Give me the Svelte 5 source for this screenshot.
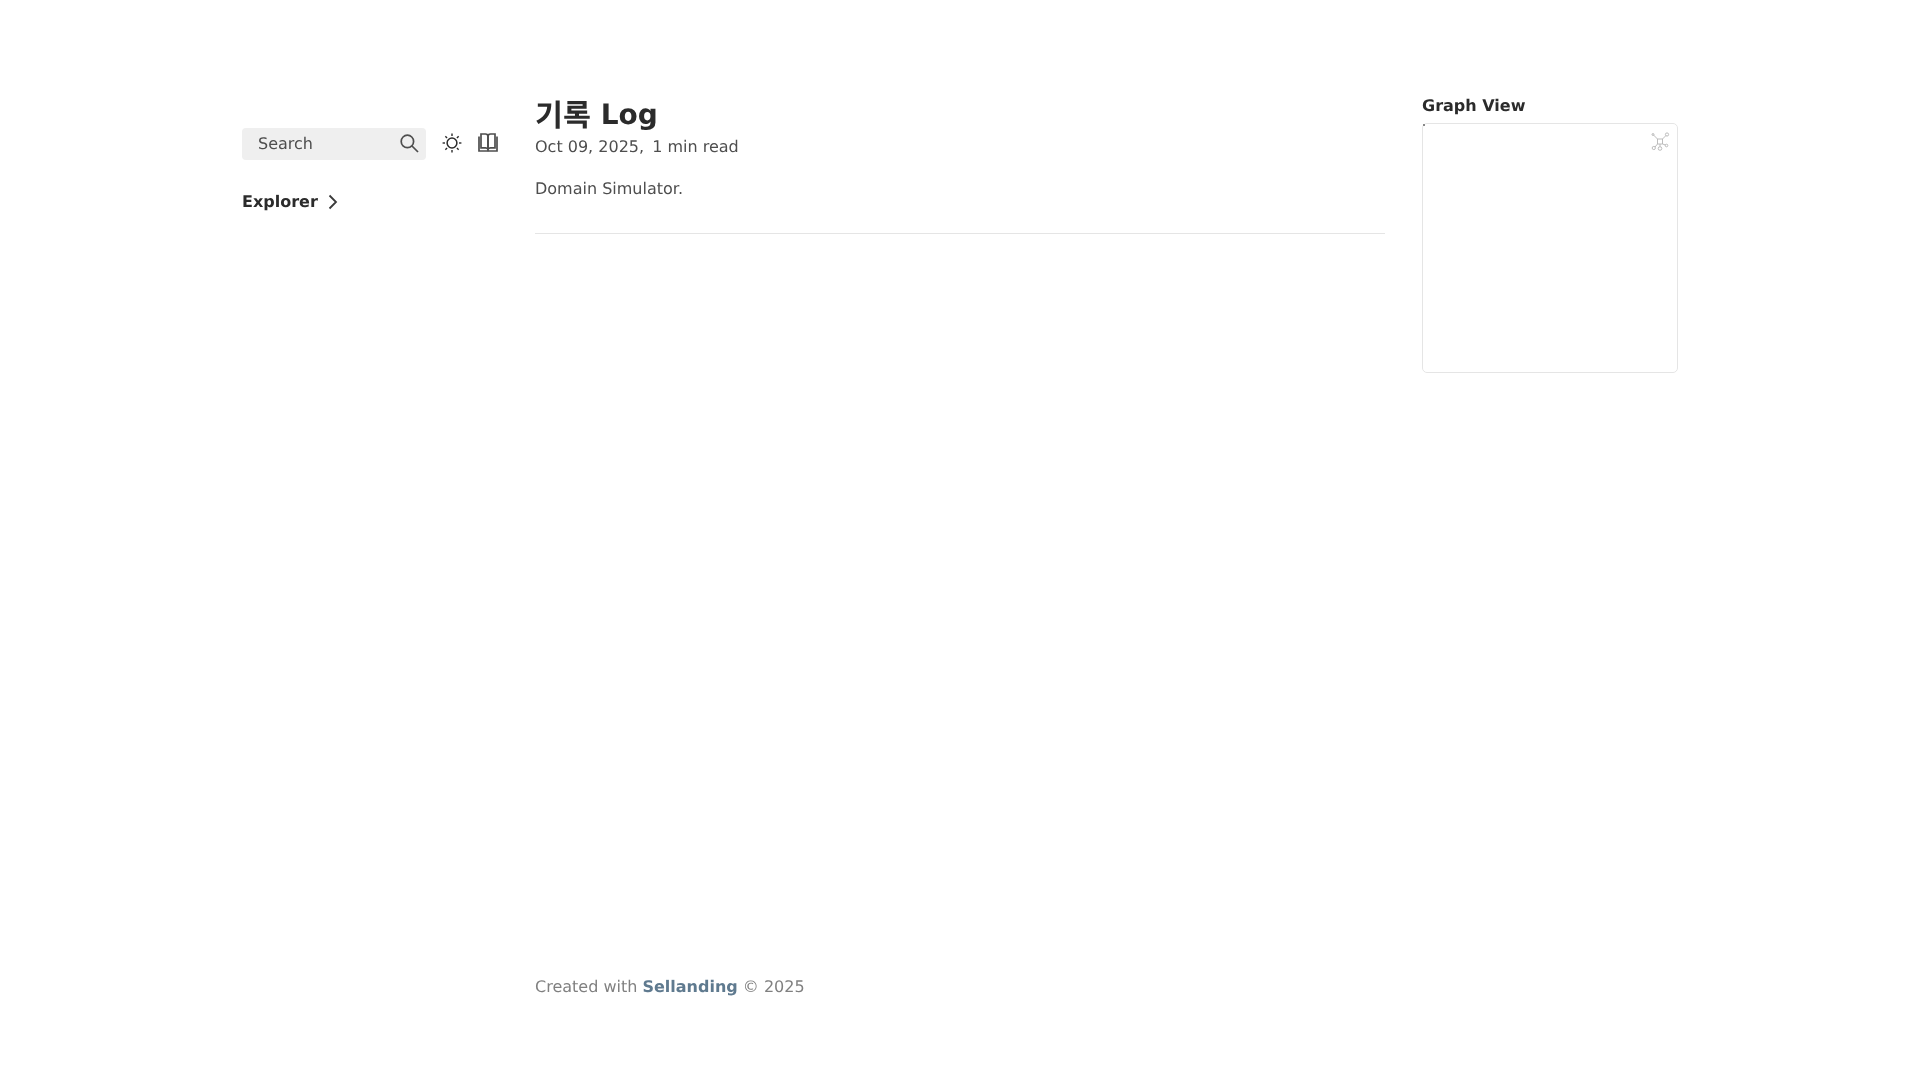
<script>
  const rays = [0, 45, 90, 135, 180, 225, 270, 315];
</script>

<div class="page">
  <aside class="left">
    <div class="tools">
      <div class="search">
        <span>Search</span>
        <svg class="search-icon" viewBox="0 0 20 20" width="20" height="20" fill="none" stroke="#4e4e4e" stroke-width="1.7">
          <circle cx="8.400" cy="8.400" r="6.200" />
          <path d="M13 13l6 6" />
        </svg>
      </div>
      <svg class="sun" viewBox="0 0 20 20" width="20" height="20" fill="none" stroke="#2b2b2b">
        <circle cx="10" cy="10" r="4.900" stroke-width="1.500" />
        {#each rays as a}
          <path d="M10 .6v2.400" stroke-width="1.400" transform="rotate({a} 10 10)" />
        {/each}
      </svg>
      <svg class="book" viewBox="0 0 20 20" width="20" height="20" fill="none" stroke="#4e4e4e" stroke-width="1.700">
        <path d="M1 3.500v14.500h18v-14.500" />
        <path d="M3 1h4.500q2.500 0 2.500 2.500v12.500q-.8-1.200-2.500-1.200H3z" />
        <path d="M17 1h-4.500q-2.500 0-2.500 2.500v12.500q.8-1.200 2.500-1.200H17z" />
      </svg>
    </div>
    <div class="explorer">
      <span>Explorer</span>
      <svg viewBox="0 0 12 18" width="12" height="18" fill="none" stroke="#3a3a3a" stroke-width="1.800">
        <path d="M2.500 2.500L9 9l-6.500 6.500" />
      </svg>
    </div>
  </aside>

  <main class="center">
    <h1><span class="hangul">기록</span> Log</h1>
    <p class="meta">Oct 09, 2025, <span>1 min read</span></p>
    <p class="body">Domain Simulator.</p>
    <hr />
  </main>

  <aside class="right">
    <h3>Graph View</h3>
    <div class="graph">
      <i class="speck"></i>
      <svg class="graph-icon" viewBox="0 0 20 20" width="20" height="20" fill="none" stroke="#b5b5b5" stroke-width="0.900">
        <path d="M7.500 7h5v5h-5z" />
        <path d="M7.500 7L3 2.500M12.500 7l3.500-3.500M12.500 12l3 1M10 12v2.500M7.500 12l-2.500 3" />
        <circle cx="17" cy="2.500" r="1.600" />
        <circle cx="3.800" cy="16" r="1.600" />
        <circle cx="10" cy="16.500" r="1.800" />
        <circle cx="16.500" cy="13.500" r="1.300" />
        <circle cx="3" cy="2.500" r="1" />
      </svg>
    </div>
  </aside>

  <footer>Created with <b>Sellanding</b> © 2025</footer>
</div>

<style>
  :global(body) {
    background: #fff;
  }
  .page {
    display: grid;
    grid-template-columns: 256px 850px 256px;
    grid-template-rows: 1fr auto;
    column-gap: 37px;
    justify-content: center;
    height: 1080px;
    box-sizing: border-box;
    padding-top: 96px;
    font-family: "DejaVu Sans", "Noto Sans CJK KR", sans-serif;
    font-size: 16px;
    color: #4e4e4e;
    text-rendering: geometricPrecision;
    will-change: transform;
  }
  .left {
    padding-top: 32px;
  }
  .tools {
    display: flex;
    align-items: center;
  }
  .search {
    width: 184px;
    height: 32px;
    border-radius: 4px;
    background: #efefef;
    display: flex;
    align-items: center;
    justify-content: space-between;
    box-sizing: border-box;
    padding: 0 7px 0 16px;
    color: #4e4e4e;
  }
  .search span {
    margin-top: -1px;
  }
  .search-icon {
    margin-top: -2px;
  }
  .sun {
    margin-left: 16px;
    margin-top: -3px;
  }
  .book {
    margin-left: 16px;
    margin-top: -3px;
  }
  .explorer {
    display: flex;
    align-items: center;
    gap: 9px;
    margin-top: 32px;
    font-weight: 700;
    color: #2b2b2b;
  }
  h1 {
    margin: 0;
    font-size: 28px;
    line-height: 38px;
    font-weight: 700;
    color: #2b2b2b;
  }
  .hangul {
    font-size: 30.4px;
    line-height: 1;
    vertical-align: -2px;
  }
  .meta {
    margin: 0;
    line-height: 26px;
  }
  .meta span {
    margin-left: 3px;
  }
  .body {
    margin: 16px 0 0;
    line-height: 26px;
  }
  hr {
    margin: 31px 0 0;
    border: 0;
    border-top: 1px solid #e5e5e5;
  }
  h3 {
    margin: 0;
    font-size: 16px;
    line-height: 19px;
    font-weight: 700;
    color: #2b2b2b;
  }
  .graph {
    position: relative;
    height: 250px;
    margin-top: 8px;
    border: 1px solid #e5e5e5;
    border-radius: 5px;
    box-sizing: border-box;
  }
  .speck {
    position: absolute;
    left: 0;
    top: 0;
    width: 2px;
    height: 2px;
    background: #888;
  }
  .graph-icon {
    position: absolute;
    top: 8px;
    right: 7px;
  }
  footer {
    grid-column: 2;
    height: 106px;
    line-height: 26px;
    color: #808080;
  }
  footer b {
    color: #5f7a8f;
  }
</style>
